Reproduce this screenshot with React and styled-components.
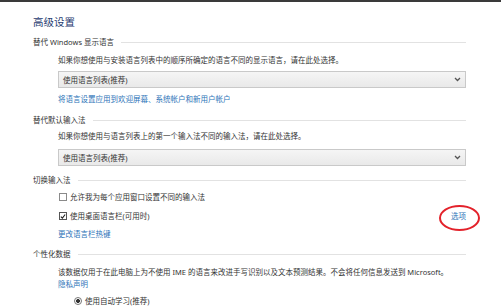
import React from "react";
import styled, { createGlobalStyle } from "styled-components";

const GlobalStyle = createGlobalStyle`
  html, body {
    margin: 0;
    padding: 0;
    background: #ffffff;
  }
  body {
    font-family: "Noto Sans", "Noto Sans CJK SC", sans-serif;
    color: #333;
  }
`;

function Chevron() {
  return (
    <svg width="7" height="5" viewBox="0 0 7 5">
      <path d="M1 1 L3.5 3.5 L6 1" fill="none" stroke="#555" strokeWidth="1.3" />
    </svg>
  );
}

function Section({ label, mt }) {
  return (
    <Header $mt={mt}>
      <HeaderLabel>{label}</HeaderLabel>
      <Rule />
    </Header>
  );
}

function Dropdown({ mt, children }) {
  return (
    <Select $mt={mt}>
      <span>{children}</span>
      <Chevron />
    </Select>
  );
}

function App() {
  return (
    <>
      <GlobalStyle />
      <Page>
        <TopBar />
        <Content>
          <Title>高级设置</Title>

          <Section label="替代 Windows 显示语言" mt={7} />
          <Text $mt={6}>
            如果你想使用与安装语言列表中的顺序所确定的语言不同的显示语言，请在此处选择。
          </Text>
          <Dropdown mt={5}>使用语言列表(推荐)</Dropdown>
          <Link $mt={5}>将语言设置应用到欢迎屏幕、系统帐户和新用户帐户</Link>

          <Section label="替代默认输入法" mt={9} />
          <Text $mt={4}>
            如果你想使用与语言列表上的第一个输入法不同的输入法，请在此处选择。
          </Text>
          <Dropdown mt={7}>使用语言列表(推荐)</Dropdown>

          <Section label="切换输入法" mt={8} />
          <Row $mt={5}>
            <Check />
            <span>允许我为每个应用窗口设置不同的输入法</span>
          </Row>
          <Row $mt={7}>
            <Check $checked>
              <svg width="7" height="7" viewBox="0 0 7 7">
                <path d="M1 3.6 L2.8 5.4 L6 1.2" fill="none" stroke="#222" strokeWidth="1.3" />
              </svg>
            </Check>
            <span>使用桌面语言栏(可用时)</span>
            <Spacer />
            <Options>
              选项
              <Circle />
            </Options>
          </Row>
          <Link $mt={6}>更改语言栏热键</Link>

          <Section label="个性化数据" mt={8} />
          <Text $mt={6}>
            该数据仅用于在此电脑上为不使用 IME 的语言来改进手写识别以及文本预测结果。不会将任何信息发送到 Microsoft。
          </Text>
          <Link $mt={0}>隐私声明</Link>
          <Row $mt={5} $indent={15}>
            <Radio />
            <span>使用自动学习(推荐)</span>
          </Row>
        </Content>
      </Page>
    </>
  );
}

export default App;

const Page = styled.div`
  width: 501px;
  height: 308px;
  overflow: hidden;
  background: #fff;
`;

const TopBar = styled.div`
  height: 2px;
  background: #3a3a3a;
`;

const Content = styled.div`
  display: flex;
  flex-direction: column;
  padding: 0 35px 0 33px;
`;

const Title = styled.div`
  margin-top: 13px;
  font-size: 10.5px;
  line-height: 14px;
  height: 14px;
  color: #1f3b70;
`;

const Header = styled.div`
  display: flex;
  align-items: center;
  gap: 7px;
  height: 12px;
  margin-top: ${(p) => p.$mt}px;
`;

const HeaderLabel = styled.span`
  font-size: 7.5px;
  line-height: 12px;
  color: #333;
  white-space: nowrap;
`;

const Rule = styled.div`
  flex: 1;
  height: 1px;
  background: #e2e2e2;
`;

const Text = styled.div`
  margin-top: ${(p) => p.$mt}px;
  padding-left: 25px;
  font-size: 7.5px;
  line-height: 12px;
  height: 12px;
  color: #333;
  white-space: nowrap;
`;

const Link = styled(Text)`
  color: #2d74b8;
`;

const Select = styled.div`
  margin-top: ${(p) => p.$mt}px;
  margin-left: 25px;
  height: 17px;
  box-sizing: border-box;
  border: 1px solid #c9c9c9;
  background: linear-gradient(#f5f5f5, #e9e9e9);
  display: flex;
  align-items: center;
  justify-content: space-between;
  padding: 0 4px 0 4px;
  font-size: 7.5px;
  color: #333;
`;

const Row = styled.div`
  position: relative;
  margin-top: ${(p) => p.$mt}px;
  padding-left: ${(p) => 26 + (p.$indent || 0)}px;
  display: flex;
  align-items: center;
  gap: 2px;
  height: 12px;
  font-size: 7.5px;
  line-height: 12px;
  color: #333;
  white-space: nowrap;
`;

const Check = styled.span`
  width: 8px;
  height: 8px;
  box-sizing: border-box;
  border: 1px solid ${(p) => (p.$checked ? "#555" : "#8a8a8a")};
  background: #fff;
  display: flex;
  align-items: center;
  justify-content: center;
  margin-right: 1px;
`;

const Radio = styled.span`
  width: 8px;
  height: 8px;
  box-sizing: border-box;
  border: 1px solid #777;
  border-radius: 50%;
  background: radial-gradient(circle, #333 0 1.8px, #fff 2.2px);
  margin-right: 1px;
`;

const Spacer = styled.span`
  flex: 1;
`;

const Options = styled.span`
  position: relative;
  color: #2d74b8;
`;

const Circle = styled.span`
  position: absolute;
  left: -12px;
  top: -5px;
  width: 41px;
  height: 26px;
  box-sizing: border-box;
  border: 2.5px solid #e3222b;
  border-radius: 50%;
`;
